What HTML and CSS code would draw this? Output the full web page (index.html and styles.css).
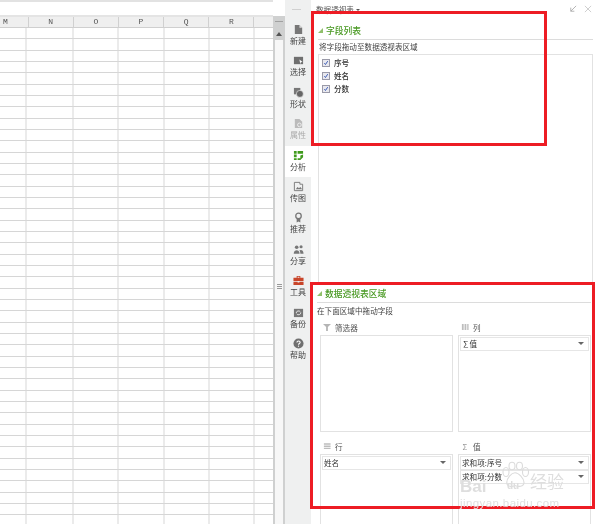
FILE: index.html
```html
<!DOCTYPE html>
<html lang="zh">
<head>
<meta charset="utf-8">
<title>数据透视表</title>
<link rel="stylesheet" href="styles.css">
</head>
<body>
<div class="app">
  <section class="sheet">
    <div class="formula-bar"></div>
    <div class="col-head">
      <span class="col cut">M</span><span class="col">N</span><span class="col">O</span><span class="col">P</span><span class="col">Q</span><span class="col">R</span><span class="col last"></span>
    </div>
    <div class="cells"></div>
  </section>
  <div class="scroll">
    <div class="scroll-body">
      <div class="scroll-cap"></div>
      <div class="scroll-up"></div>
      <div class="scroll-track"></div>
    </div>
    <div class="grip"></div>
  </div>
  <nav class="side">
    <div class="side-top"></div>
    <div class="tool">
      <svg class="ico" viewBox="0 0 12 12"><path d="M2 1h5l3 3v7H2z" fill="#777"/><path d="M7 1v3h3" fill="#ddd"/></svg>
      <span>新建</span>
    </div>
    <div class="tool">
      <svg class="ico" viewBox="0 0 12 12"><path d="M1 2h10v8H1z" fill="#6f6f6f"/><path d="M7 5l3.500 2.500L8.500 8l-.5 2z" fill="#fff"/></svg>
      <span>选择</span>
    </div>
    <div class="tool">
      <svg class="ico" viewBox="0 0 12 12"><path d="M1 1h7v7H1z" fill="#777"/><circle cx="7.500" cy="7.500" r="3.800" fill="#666" stroke="#f0f0f0" stroke-width=".7"/></svg>
      <span>形状</span>
    </div>
    <div class="tool off">
      <svg class="ico" viewBox="0 0 12 12"><path d="M2 1h5l3 3v7H2z" fill="#bbb"/><circle cx="7" cy="7.500" r="2" fill="none" stroke="#f0f0f0"/></svg>
      <span>属性</span>
    </div>
    <div class="tool active">
      <svg class="ico" viewBox="0 0 12 12"><path d="M1 1h3v3H1zM1 5h3v3H1zM1 9h3v2H1zM5 1h6v3H5zM8 6l3-1v3l-3 3H5V9h3z" fill="#3f9a1c"/></svg>
      <span>分析</span>
    </div>
    <div class="tool">
      <svg class="ico" viewBox="0 0 12 12"><path d="M1.500 1.500h6v2h3v7h-9z" fill="none" stroke="#777"/><path d="M3 9l2-2.500L6.500 8 8 6.500 10 9z" fill="#777"/></svg>
      <span>传图</span>
    </div>
    <div class="tool">
      <svg class="ico" viewBox="0 0 12 12"><circle cx="6" cy="4.300" r="3" fill="none" stroke="#777" stroke-width="1.400"/><path d="M4 7.500v4l2-1.200 2 1.200v-4z" fill="#777"/></svg>
      <span>推荐</span>
    </div>
    <div class="tool">
      <svg class="ico" viewBox="0 0 12 12"><circle cx="4" cy="3.500" r="2" fill="#777"/><circle cx="8.800" cy="3" r="1.700" fill="#777"/><path d="M.8 10.500c0-5 6.400-5 6.400 0zM8 10.500h3.500c0-3.800-3-4.500-4.600-3.300C7.700 8 8 9 8 10.500z" fill="#777"/></svg>
      <span>分享</span>
    </div>
    <div class="tool">
      <svg class="ico" viewBox="0 0 12 12"><path d="M4 3V1.200h4V3h3.500v3.500h-11V3zM5 3h2V2H5z" fill="#c8452a" fill-rule="evenodd"/><path d="M.5 7.300h4.500v1h2v-1h4.500V11H.500z" fill="#c8452a"/></svg>
      <span>工具</span>
    </div>
    <div class="tool">
      <svg class="ico" viewBox="0 0 12 12"><path d="M1 2h10v9H1z" fill="#777"/><path d="M3.500 6.500a2.500 2.500 0 0 1 4.500-1.200M8.500 6a2.500 2.500 0 0 1-4.500 1.500" fill="none" stroke="#eee"/></svg>
      <span>备份</span>
    </div>
    <div class="tool">
      <svg class="ico" viewBox="0 0 12 12"><circle cx="6" cy="6" r="5.500" fill="#707070"/><path d="M4.300 4.800C4.300 2.800 7.800 2.800 7.800 4.800 7.800 6 6 6 6 7.300" fill="none" stroke="#fff" stroke-width="1.200"/><path d="M5.400 8.300h1.200v1.200H5.400z" fill="#fff"/></svg>
      <span>帮助</span>
    </div>
  </nav>
  <main class="panel">
    <header class="panel-head">
      <span class="panel-title">数据透视表 <i class="caret"></i></span>
      <span class="win-btns">
        <svg class="win" viewBox="0 0 9 9"><path d="M8 1L2 7M2 3v4h4" fill="none" stroke="#aaa"/></svg>
        <svg class="win" viewBox="0 0 9 9"><path d="M1 1l7 7M8 1L1 8" fill="none" stroke="#bbb" stroke-width=".8"/></svg>
      </span>
    </header>
    <section class="fields">
      <h2 class="sec"><i class="tri"></i>字段列表</h2>
      <p class="hint">将字段拖动至数据透视表区域</p>
      <div class="list">
        <label class="chk"><i class="box"><svg viewBox="0 0 8 8"><path d="M1.800 4.200L3.300 6 6.300 1.500" fill="none" stroke="#2b4fb0" stroke-width="1.200"/></svg></i>序号</label>
        <label class="chk"><i class="box"><svg viewBox="0 0 8 8"><path d="M1.800 4.200L3.300 6 6.300 1.500" fill="none" stroke="#2b4fb0" stroke-width="1.200"/></svg></i>姓名</label>
        <label class="chk"><i class="box"><svg viewBox="0 0 8 8"><path d="M1.800 4.200L3.300 6 6.300 1.500" fill="none" stroke="#2b4fb0" stroke-width="1.200"/></svg></i>分数</label>
      </div>
    </section>
    <section class="areas">
      <h2 class="sec sec2"><i class="tri"></i>数据透视表区域</h2>
      <p class="hint hint2">在下面区域中拖动字段</p>
      <div class="area-grid">
        <div class="area">
          <div class="area-label"><svg class="a-ico" viewBox="0 0 9 9"><path d="M0 1h9L5.500 4.500V9h-2V4.500z" fill="#b5b5b5"/></svg>筛选器</div>
          <div class="well"></div>
        </div>
        <div class="area">
          <div class="area-label"><svg class="a-ico" viewBox="0 0 9 9"><path d="M1 1h2v7H1zM4 1h2v7H4zM7 1h1.500v7H7z" fill="#bdbdbd"/></svg>列</div>
          <div class="well"><div class="pill">∑值<i class="drop"></i></div></div>
        </div>
        <div class="area">
          <div class="area-label"><svg class="a-ico" viewBox="0 0 9 9"><path d="M1 1.500h7.500v1.500H1zM1 4h7.500v1.500H1zM1 6.500h7.500V8H1z" fill="#bdbdbd"/></svg>行</div>
          <div class="well tall"><div class="pill">姓名<i class="drop"></i></div></div>
        </div>
        <div class="area">
          <div class="area-label"><span class="sigma">Σ</span>值</div>
          <div class="well tall">
            <div class="pill">求和项:序号<i class="drop"></i></div>
            <div class="pill">求和项:分数<i class="drop"></i></div>
          </div>
        </div>
      </div>
    </section>
  </main>
  <div class="mark mark-top"></div>
  <div class="mark mark-bottom"></div>
  <div class="baidu">
    <svg class="paw" viewBox="0 0 40 36"><g fill="none" stroke="#dcdcdc" stroke-width="1.500"><ellipse cx="8" cy="14" rx="4" ry="6"/><ellipse cx="16" cy="6" rx="4" ry="5"/><ellipse cx="26" cy="6" rx="4" ry="5"/><ellipse cx="34" cy="14" rx="4" ry="6"/><path d="M20 15c-5 0-11 8-11 13 0 6 7 6 11 4 4 2 12 2 12-4 0-5-7-13-12-13z"/></g></svg>
    <span class="b-bai">Bai</span><span class="b-du">du</span><span class="b-jy">经验</span>
    <span class="b-url">jingyan.baidu.com</span>
  </div>
</div>
</body>
</html>
```
FILE: styles.css
```css
* { box-sizing: border-box; }
html, body { margin: 0; height: 100%; background: #fff; }
body { font-family: "Noto Sans CJK SC", "Liberation Sans", sans-serif; color: #333; overflow: hidden; }
.app { position: relative; display: flex; width: 600px; height: 524px; overflow: hidden; filter: blur(.25px); }

.sheet { width: 273px; flex: none; display: flex; flex-direction: column; }
.formula-bar { height: 17px; border-top: 2px solid #e2e2e2; border-bottom: 2px solid #e4e4e4; flex: none; }
.col-head { display: flex; height: 11px; background: #efefef; border-bottom: 1px solid #cfcfcf; flex: none; }
.col { width: 45.2px; flex: none; border-right: 1px solid #d0d0d0; text-align: center; font: 8px/10px "Liberation Mono", monospace; color: #555; }
.col.cut { width: 28.500px; text-align: left; padding-left: 3px; }
.col.last { width: 19px; border-right: 0; }
.cells {
  flex: 1;
  background-image:
    repeating-linear-gradient(to right, transparent 0, transparent 44.2px, #d8d8d8 44.2px, #d8d8d8 45.200px),
    repeating-linear-gradient(to bottom, transparent 0, transparent 10.330px, #d6d6d6 10.330px, #d6d6d6 11.330px);
  background-position: 28.500px 0, 0 0;
}

.scroll { position: relative; width: 12px; flex: none; background: #fff; padding-top: 16px; display: flex; flex-direction: column; }
.scroll-body { flex: 1; background: #cfd0d0; padding: 0 2px; display: flex; flex-direction: column; }
.scroll-cap { height: 12px; flex: none; }
.scroll-cap::after { content: ""; display: block; height: 1px; background: #a0a0a0; margin: 5px 0 0; }
.scroll-up { height: 12px; flex: none; position: relative; }
.scroll-up::after { content: ""; position: absolute; left: 1px; top: 4px; border: 3px solid transparent; border-top: 0; border-bottom: 4px solid #555; }
.scroll-track { flex: 1; background: #f7f7f7; }
.grip { position: absolute; left: 4px; top: 284px; width: 5px; height: 5px; background: repeating-linear-gradient(to bottom, #999 0, #999 1px, transparent 1px, transparent 2px); }

.side { width: 26px; flex: none; background: #eff0f0; padding-top: 2px; display: flex; flex-direction: column; }
.side-top { height: 18px; flex: none; position: relative; }
.side-top::after { content: ""; position: absolute; left: 7px; top: 7px; width: 9px; height: 1px; background: #d0d0d0; }
.tool { height: 31.400px; flex: none; display: flex; flex-direction: column; align-items: center; padding-top: 4px; font-size: 8px; line-height: 10px; color: #444; }
.tool span { margin-top: 1px; }
.tool.off { color: #aaa; }
.tool.active { background: #fff; }
.ico { width: 11px; height: 11px; display: block; }

.panel { flex: 1; min-width: 0; display: flex; flex-direction: column; padding: 0 7px; height: 524px; background: #fff; }
.panel-head { height: 15px; flex: none; display: flex; justify-content: space-between; align-items: center; padding-top: 3px; }
.panel-title { font-size: 7.600px; color: #555; margin-left: -2px; }
.caret { display: inline-block; border: 2px solid transparent; border-top: 2px solid #555; border-bottom: 0; vertical-align: middle; }
.win-btns { display: flex; gap: 7px; margin-right: 1px; }
.win { width: 8px; height: 8px; display: block; }

.fields { flex: none; height: 268px; display: flex; flex-direction: column; }
.sec { margin: 8px 0 0; height: 17px; padding: 2px 0 0 8px; font-size: 8.750px; line-height: 11px; font-weight: 500; color: #4a9a24; border-bottom: 1px solid #dcdcdc; position: relative; flex: none; }
.tri { position: absolute; left: 0; top: 5px; width: 0; height: 0; border-left: 5px solid transparent; border-bottom: 5px solid #8fbf6a; }
.hint { margin: 2px 0 2px 1px; font-size: 7.600px; line-height: 10px; color: #444; flex: none; }
.list { flex: 1; border: 1px solid #e2e2e2; padding: 1px 0 0 3px; display: flex; flex-direction: column; }
.chk { display: flex; align-items: center; gap: 4px; height: 13.200px; font-size: 7.600px; color: #333; font-weight: 500; flex: none; }
.box { width: 8px; height: 8px; border: 1px solid #9a9aa8; background: #e8e8ee; display: block; flex: none; }
.box svg { display: block; width: 6px; height: 6px; }

.areas { flex: 1; min-height: 0; display: flex; flex-direction: column; }
.sec2 { margin: 0 2px 0 -1px; height: 20px; padding-top: 5px; }
.sec2 .tri { top: 8px; }
.hint2 { margin: 3px 0 0 -1px; }
.area-grid { display: grid; grid-template-columns: 133px 133px; grid-template-rows: 119px 1fr; column-gap: 5px; padding-left: 2px; margin-top: 3px; flex: 1; min-height: 0; }
.area { display: flex; flex-direction: column; min-height: 0; }
.area-label { height: 14px; flex: none; display: flex; align-items: center; gap: 4px; padding: 0 0 2px 3px; font-size: 7.600px; color: #555; margin-top: 2px; }
.a-ico { width: 8px; height: 8px; display: block; }
.sigma { width: 8px; font-size: 8px; color: #999; text-align: center; }
.well { height: 97px; border: 1px solid #e2e2e2; padding: 1px 1px 0; flex: none; }
.well.tall { height: 90px; }
.pill { height: 14px; border: 1px solid #e6e6e6; position: relative; font-size: 7.600px; line-height: 12px; padding-left: 1px; color: #333; }
.drop { position: absolute; right: 4px; top: 4px; border: 3px solid transparent; border-top: 3px solid #666; border-bottom: 0; }

.mark { position: absolute; border: 3px solid #ed1c24; pointer-events: none; }
.mark-top { left: 311px; top: 11px; width: 236px; height: 135px; }
.mark-bottom { left: 310px; top: 282px; width: 285px; height: 227px; }

.baidu { position: absolute; left: 459px; top: 454px; width: 110px; height: 60px; pointer-events: none; }
.paw { position: absolute; left: 41px; top: 4px; width: 30px; height: 34px; }
.b-bai { position: absolute; left: 1px; top: 23px; font: 700 17px/20px "Liberation Sans", sans-serif; color: #dedede; }
.b-du { position: absolute; left: 48px; top: 26px; font: 700 10px/12px "Liberation Sans", sans-serif; color: #dedede; }
.b-jy { position: absolute; left: 71px; top: 17px; font-size: 17px; line-height: 20px; color: #dedede; }
.b-url { position: absolute; left: 1px; top: 43px; font: 11.500px/13px "Liberation Sans", sans-serif; letter-spacing: .4px; color: #e0e0e0; white-space: nowrap; }
```
